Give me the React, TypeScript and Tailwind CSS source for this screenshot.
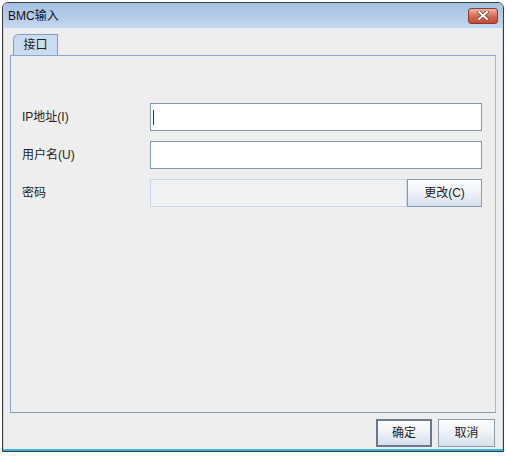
const font = { fontFamily: '"Liberation Sans", "Noto Sans CJK SC", sans-serif' };

function CloseButton() {
  return (
    <div className="w-[30px] h-[16px] rounded-[3px] border border-[#8a3a30] bg-gradient-to-b from-[#eeb3a5] via-[#d86a55] to-[#c44a35] flex items-center justify-center">
      <svg width="12" height="9" viewBox="0 0 12 9">
        <path d="M2 1 L10 8 M10 1 L2 8" stroke="#7a3a30" strokeWidth="3.4" strokeLinecap="square" />
        <path d="M2 1 L10 8 M10 1 L2 8" stroke="#ffffff" strokeWidth="2" strokeLinecap="square" />
      </svg>
    </div>
  );
}

function Button({ label, focused }: { label: string; focused?: boolean }) {
  return (
    <div
      className={
        'h-[28px] flex items-center justify-center text-[12px] text-[#222] bg-gradient-to-b from-[#fdfdfe] via-[#eef2f7] to-[#d5e0ee] ' +
        (focused ? 'border-2 border-[#6a7a8c]' : 'border border-[#8d9bab]')
      }
    >
      {label}
    </div>
  );
}

function Row({ label, children }: { label: string; children: any }) {
  return (
    <div className="flex items-center h-[28px]">
      <div className="w-[139px] pl-[11px] text-[12px] text-[#222]">{label}</div>
      <div className="flex-1 flex">{children}</div>
    </div>
  );
}

export default function App() {
  return (
    <div className="w-[506px] h-[456px] bg-white pt-[2px] pl-[2px]" style={font}>
      <div className="w-[502px] h-[450px] border border-[#3a3a3a] rounded-t-[6px] overflow-hidden flex flex-col bg-[#ededed]">
        {/* title bar */}
        <div className="h-[25px] shrink-0 bg-gradient-to-b from-[#a5c0e2] to-[#c3d7ee] flex items-center justify-between pl-[5px] pr-[5px]">
          <span className="text-[12px] text-[#111]">BMC输入</span>
          <CloseButton />
        </div>

        <div className="flex-1 flex flex-col border-x border-[#c7d6ea] pt-[6px] px-[6px]">
          {/* tab strip */}
          <div className="flex pl-[3px] h-[21px]">
            <div className="w-[45px] h-[21px] border border-b-0 border-[#7f9cc9] rounded-tl-[6px] bg-[#cadcf0] text-[12px] text-[#222] flex items-center justify-center">
              接口
            </div>
          </div>

          {/* panel */}
          <div className="h-[358px] border border-[#8ba5cf] border-b-[#8b9db3] border-r-[#a7b6c9] bg-[#eeeeee] pt-[47px] pr-[13px] flex flex-col gap-[10px]">
            <Row label="IP地址(I)">
              <div className="flex-1 h-[28px] border border-[#8597ad] bg-white flex items-center pl-[2px]">
                <div className="w-[1px] h-[15px] bg-[#333]" />
              </div>
            </Row>
            <Row label="用户名(U)">
              <div className="flex-1 h-[28px] border border-[#8597ad] bg-white" />
            </Row>
            <Row label="密码">
              <div className="flex-1 h-[28px] border border-[#cbd7e6] bg-[#eff1f3]" />
              <div className="w-[75px]">
                <Button label="更改(C)" />
              </div>
            </Row>
          </div>

          {/* footer */}
          <div className="flex justify-end gap-[6px] pt-[6px] pr-[1px]">
            <div className="w-[56px]">
              <Button label="确定" focused />
            </div>
            <div className="w-[57px]">
              <Button label="取消" />
            </div>
          </div>
        </div>
        <div className="h-[2px] bg-[#35b5dc]" />
      </div>
    </div>
  );
}
